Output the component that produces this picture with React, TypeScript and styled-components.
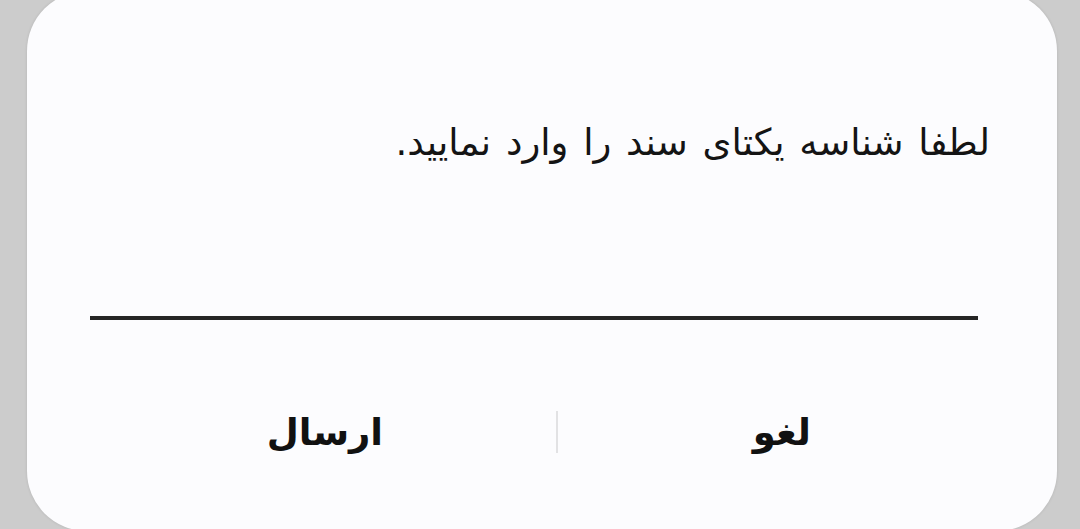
import styled, { createGlobalStyle } from "styled-components";

const GlobalStyle = createGlobalStyle`
    html, body {
        margin: 0;
        padding: 0;
        background: #cccccc;
        overflow: hidden;
    }
    body {
        font-family: "DejaVu Sans", "Noto Sans", sans-serif;
    }
`

const Screen = styled.div`
    width: 1080px;
    height: 529px;
    overflow: hidden;
`

const Dialog = styled.div`
    direction: rtl;
    width: 1030px;
    height: 540px;
    margin: -9px 0 0 27px;
    background: #fcfcfe;
    border-radius: 60px;
    box-shadow: 0 0 3px rgba(0, 0, 0, 0.12);
    display: flex;
    flex-direction: column;
    box-sizing: border-box;
    padding-top: 130px;
`

const Message = styled.div`
    padding: 0 67px 0 0;
    font-size: 37px;
    line-height: 44px;
    word-spacing: 3px;
    color: #141414;
`

const InputLine = styled.div`
    height: 4px;
    margin: 151px 79px 0 63px;
    background: #252525;
`

const Actions = styled.div`
    display: flex;
    align-items: center;
    margin: 88px 51px 0 67px;
    height: 48px;
`

const ActionButton = styled.button<{ $grow: number }>`
    flex: ${p => p.$grow};
    background: none;
    border: none;
    padding: 0;
    font-family: "DejaVu Sans", sans-serif;
    font-size: 37px;
    font-weight: bold;
    color: #111;
    cursor: pointer;
`

const Separator = styled.div`
    width: 2px;
    height: 42px;
    background: #e2e2e4;
`

export default function App() {
    return (
        <Screen>
            <GlobalStyle />
            <Dialog>
                <Message>لطفا شناسه یکتای سند را وارد نمایید.</Message>
                <InputLine />
                <Actions>
                    <ActionButton $grow={1}>لغو</ActionButton>
                    <Separator />
                    <ActionButton $grow={1.03}>ارسال</ActionButton>
                </Actions>
            </Dialog>
        </Screen>
    )
}
